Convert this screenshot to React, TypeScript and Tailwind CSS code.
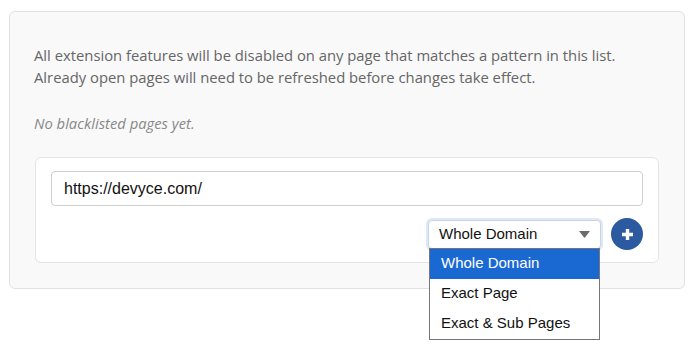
import React from 'react';

const options = ['Whole Domain', 'Exact Page', 'Exact & Sub Pages'];

export default function App() {
  return (
    <div className="w-[692px] h-[352px] bg-white pt-[11px] pl-[9px]">
      <div className="w-[676px] h-[278px] rounded-md border border-[#e1e1e1] bg-[#f9f9f9] px-6 pt-[32px] font-['Open_Sans',sans-serif]">
        <p className="text-[14.8px] leading-[22px] text-[#666]">
          All extension features will be disabled on any page that matches a pattern in this list.
          <br />
          Already open pages will need to be refreshed before changes take effect.
        </p>
        <p className="mt-[24px] text-[14.8px] leading-[22px] italic text-[#888]">No blacklisted pages yet.</p>

        <div className="mt-[23px] ml-px w-[624px] h-[106px] rounded-md border border-[#e4e4e4] bg-white px-[15px] pt-[13px]">
          <div className="h-[35px] rounded border border-[#cfcfcf] bg-white px-3 flex items-center font-['Liberation_Sans',Arial,sans-serif] text-[16px] text-[#111]">
            https://devyce.com/
          </div>

          <div className="mt-[12px] flex justify-end items-center gap-[10px]">
            <div className="relative">
              <div className="w-[173px] h-[29px] rounded border border-[#c9d3e6] ring-2 ring-[#dfe8f6] bg-white pl-[10px] pr-[10px] flex items-center justify-between font-['Liberation_Sans',Arial,sans-serif] text-[15px] text-[#111]">
                <span>Whole Domain</span>
                <svg width="11" height="7" viewBox="0 0 11 7">
                  <path d="M0 0 L11 0 L5.5 7 Z" fill="#6b6b6b" />
                </svg>
              </div>
              <ul className="absolute left-px top-[28px] w-[171px] border border-[#767676] bg-white font-['Liberation_Sans',Arial,sans-serif] text-[15px] text-[#111] z-10">
                {options.map((o, i) => (
                  <li
                    key={o}
                    className={`h-[30px] pl-[11px] flex items-center ${i === 0 ? 'bg-[#1a69d2] text-white' : ''}`}
                  >
                    {o}
                  </li>
                ))}
              </ul>
            </div>
            <button
              type="button"
              className="w-8 h-8 rounded-full bg-[#2c5aa0] flex items-center justify-center"
            >
              <svg width="13" height="13" viewBox="0 0 13 13">
                <path d="M6.5 1 V12 M1 6.5 H12" stroke="white" strokeWidth="3.4" strokeLinecap="butt" />
              </svg>
            </button>
          </div>
        </div>
      </div>
    </div>
  );
}
